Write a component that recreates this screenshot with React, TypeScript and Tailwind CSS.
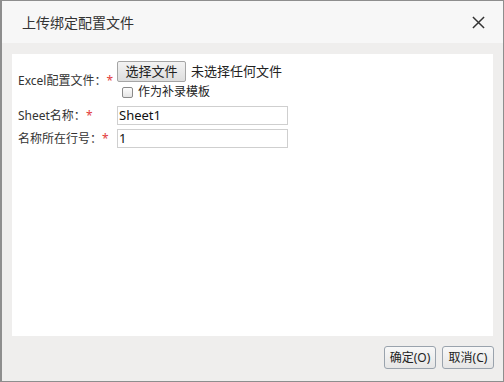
import React from "react";

const font = "font-['Segoe_UI','Noto_Sans','Noto_Sans_CJK_SC',sans-serif]";

function Req() {
  return <span className="text-[#e23b3b]">*</span>;
}

function TextBox({ value }: { value: string }) {
  return (
    <div className="flex h-[19px] w-[171px] items-center border border-[#cfcfcf] bg-white px-[1px] text-[13px] text-[#111]">
      {value}
    </div>
  );
}

function DlgButton({ label }: { label: string }) {
  return (
    <button className="flex h-[23px] w-[52px] items-center justify-center rounded-[3px] border border-[#9aa3ad] bg-gradient-to-b from-[#f8f8f8] to-[#e6e6e6] text-[12px] text-[#222]">
      {label}
    </button>
  );
}

export default function App() {
  return (
    <div className={`h-[382px] w-[504px] bg-[#8e8e8e] pl-[2px] pt-[1px] ${font}`}>
      <div className="flex h-[380px] w-[501px] flex-col bg-[#efeeed]">
        {/* title bar */}
        <div className="flex h-[42px] items-center justify-between bg-[#f7f7f7] pl-[20px] pr-[18px]">
          <span className="text-[14px] text-[#333]">上传绑定配置文件</span>
          <svg viewBox="0 0 14 14" className="h-[13px] w-[13px] text-[#333]">
            <path d="M1 1L13 13M13 1L1 13" stroke="currentColor" strokeWidth="1.6" />
          </svg>
        </div>

        {/* body */}
        <div className="px-[10px] pt-[11px]">
          <div className="flex h-[282px] flex-col bg-white pl-[6px] pt-[7px] text-[12px] text-[#333]">
            <div className="flex items-start">
              <div className="w-[99px] shrink-0 whitespace-nowrap pt-[11px] leading-[18px]">
                Excel配置文件：<Req />
              </div>
              <div className="flex flex-col">
                <div className="flex items-center gap-[5px]">
                  <button className="flex h-[21px] w-[69px] items-center justify-center rounded-[2px] border border-[#a5a5a5] bg-gradient-to-b from-[#f3f3f3] to-[#dedede] text-[13px] text-[#222]">
                    选择文件
                  </button>
                  <span className="text-[13px] text-[#222]">未选择任何文件</span>
                </div>
                <label className="ml-[5px] mt-[4px] flex items-center gap-[5px] leading-[12px]">
                  <span className="h-[11px] w-[11px] rounded-[2px] border border-[#8a8a8a] bg-gradient-to-b from-[#fdfdfd] to-[#e4e4e4]" />
                  <span className="text-[12px] text-[#222]">作为补录模板</span>
                </label>
              </div>
            </div>

            <div className="mt-[8px] flex items-center">
              <div className="w-[99px] shrink-0 whitespace-nowrap">
                Sheet名称：<Req />
              </div>
              <TextBox value="Sheet1" />
            </div>

            <div className="mt-[4px] flex items-center">
              <div className="w-[99px] shrink-0 whitespace-nowrap">
                名称所在行号：<Req />
              </div>
              <TextBox value="1" />
            </div>
          </div>
        </div>

        {/* footer */}
        <div className="flex justify-end gap-[6px] pr-[9px] pt-[10px]">
          <DlgButton label="确定(O)" />
          <DlgButton label="取消(C)" />
        </div>
      </div>
    </div>
  );
}
